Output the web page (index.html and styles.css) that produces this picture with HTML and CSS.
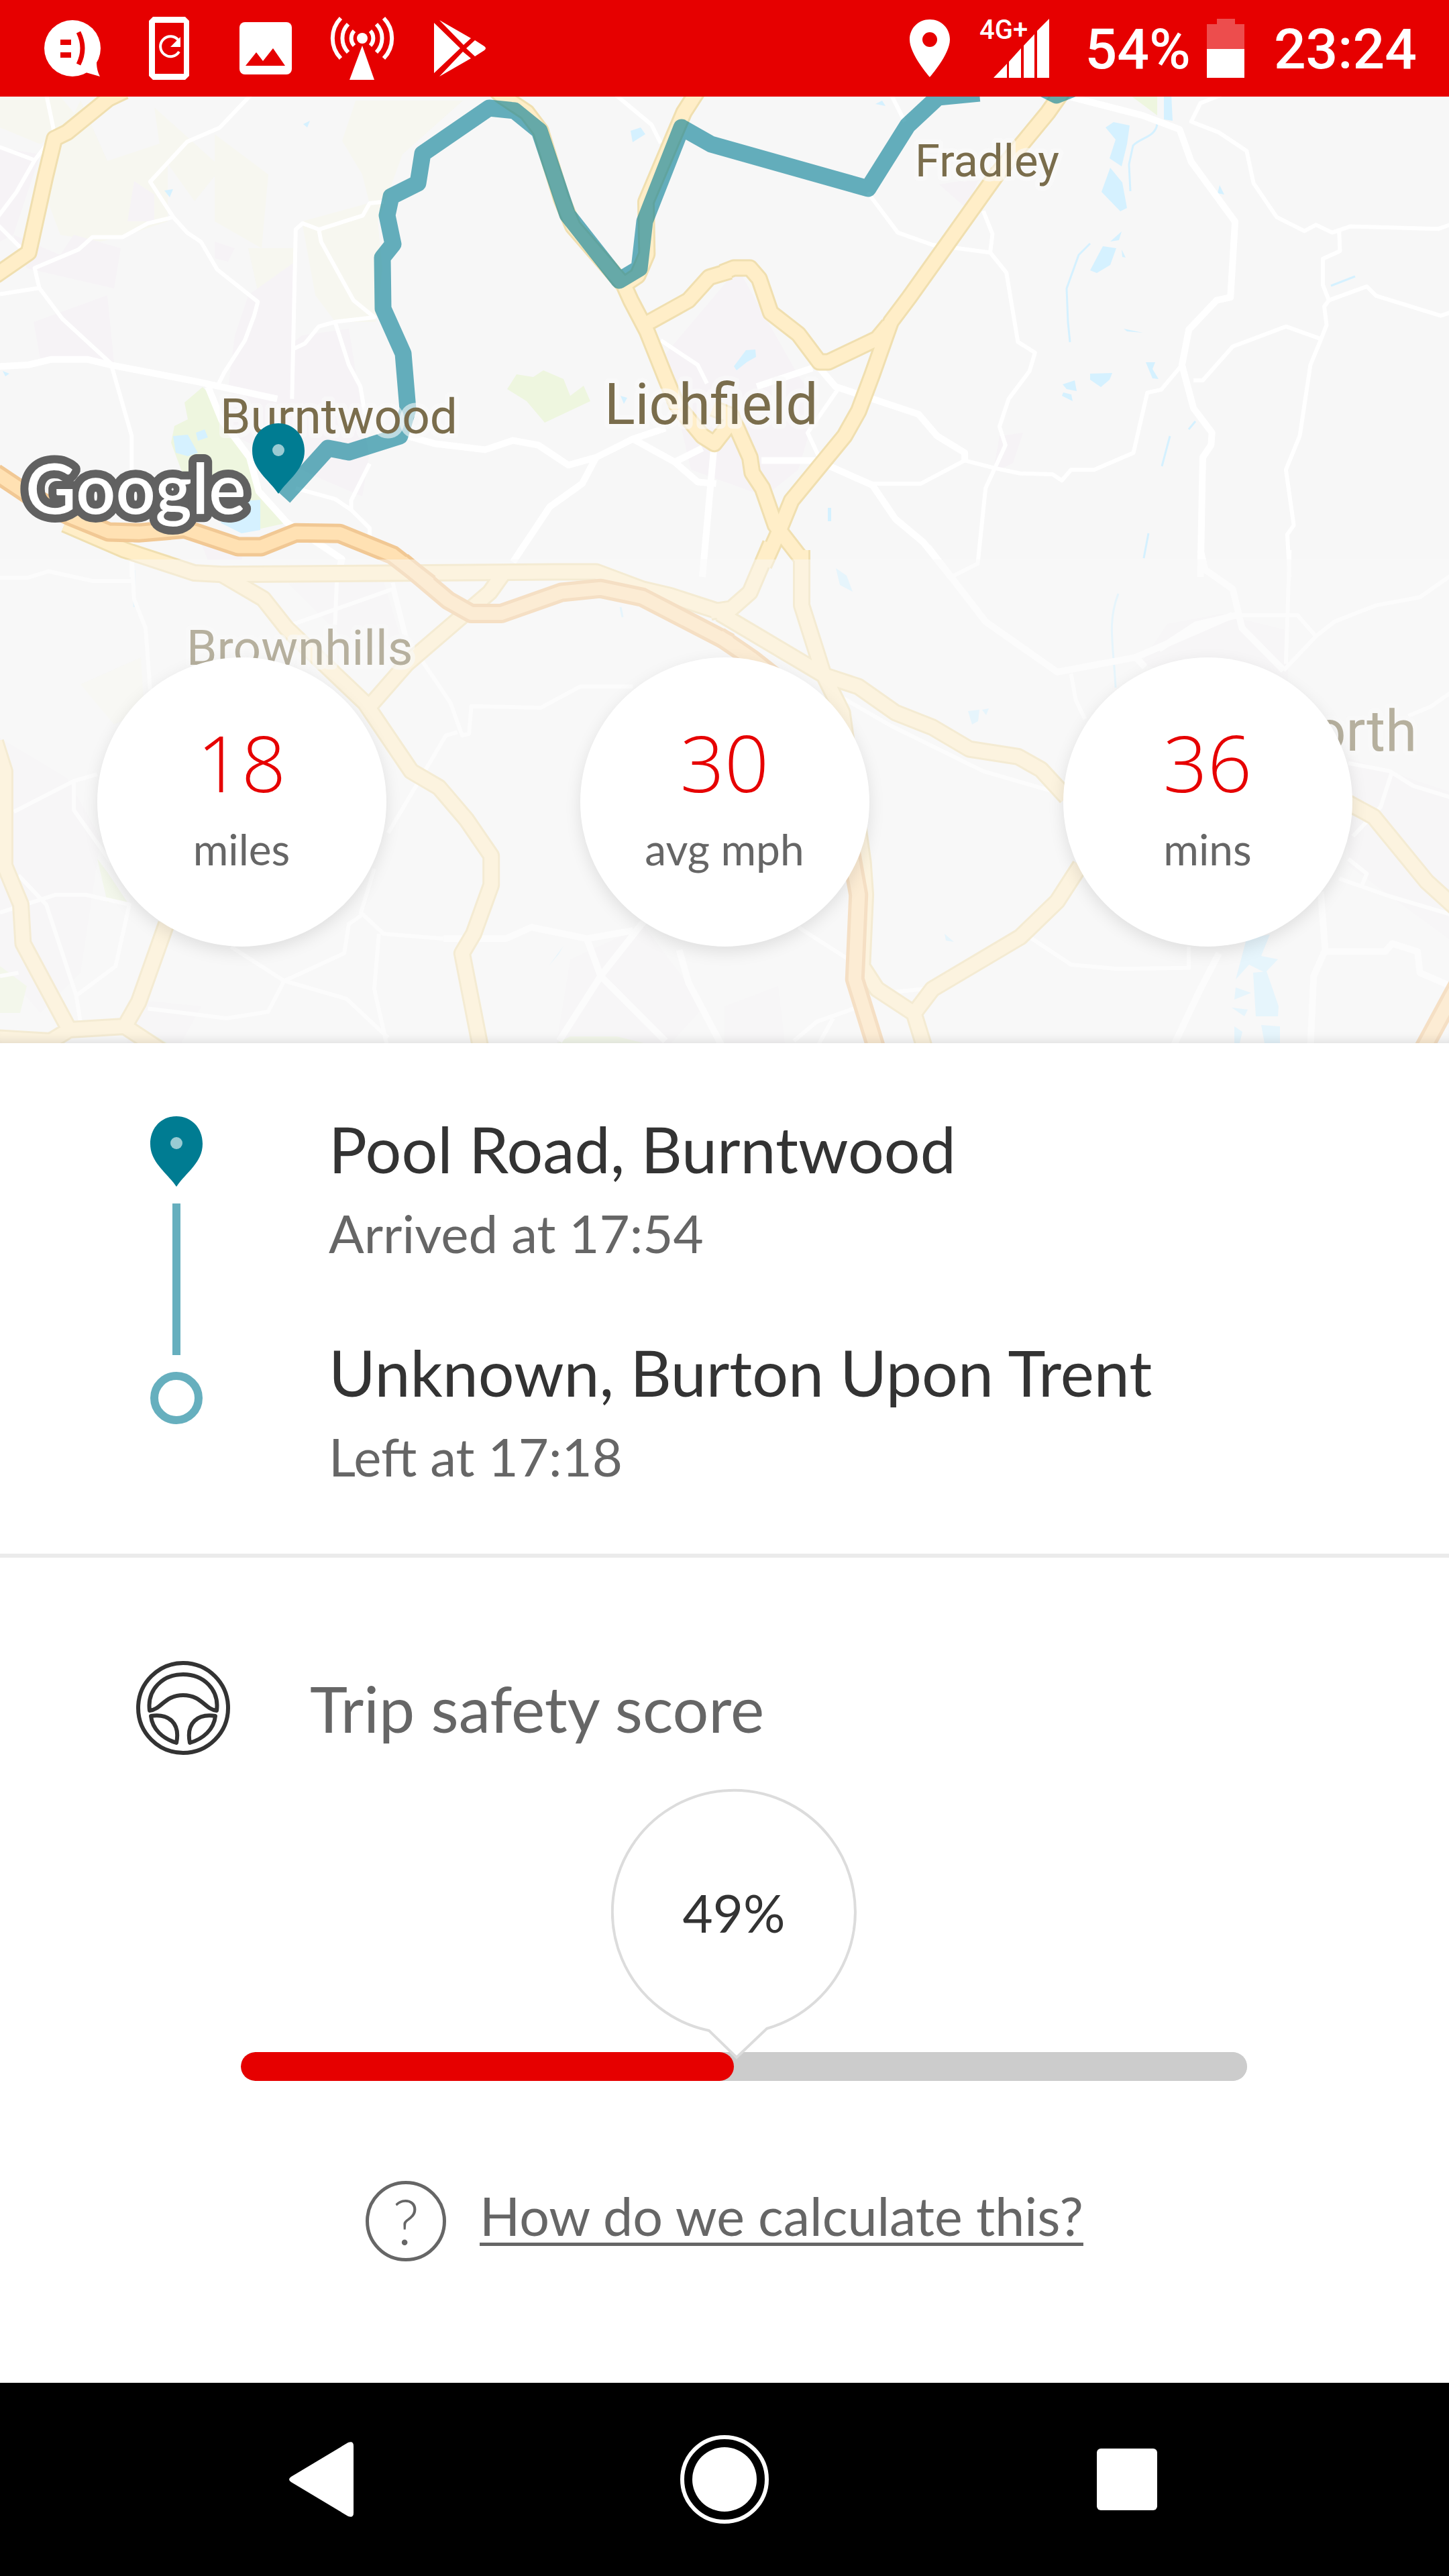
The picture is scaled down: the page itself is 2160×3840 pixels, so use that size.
FILE: index.html
```html
<!DOCTYPE html>
<html lang="en">
<head>
<meta charset="utf-8">
<meta name="viewport" content="width=device-width, initial-scale=1">
<title>Trip details</title>
<link rel="stylesheet" href="styles.css">
</head>
<body>
<header class="status">
  <div class="status-group status-apps">
    <svg class="status-icon" viewBox="0 0 96 96" aria-hidden="true"><circle cx="48" cy="48" r="42"/><path d="M84 68C84 78 86 84 89 90L68 84Z"/><path class="cut" d="M30 35h16v8H30zM30 54h16v8H30z"/><path class="cut-line" d="M57 24Q69 48 57 72" stroke-width="7"/></svg>
    <svg class="status-icon" viewBox="0 0 96 96" aria-hidden="true"><path fill-rule="evenodd" d="M24 1H72L78 7V89L72 95H24L18 89V7ZM27 10V86H70V10Z"/><path class="line" d="M62 36A15 15 0 1 0 63 53" stroke-width="4"/><path d="M65 31V46H50Z"/></svg>
    <svg class="status-icon" viewBox="0 0 96 96" aria-hidden="true"><rect x="9" y="9" width="78" height="78" rx="8"/><path class="cut" d="M18 74L34 54 44 67 59 48 77 74Z"/></svg>
    <svg class="status-icon" viewBox="0 0 96 96" aria-hidden="true"><circle cx="48" cy="33" r="8"/><path d="M48 44L66 95H29Z"/><path class="line" stroke-width="6" d="M16 3A43 43 0 0 0 16 63M27 12A30 30 0 0 0 27 54M36 22A16 16 0 0 0 36 44M80 3A43 43 0 0 1 80 63M69 12A30 30 0 0 1 69 54M60 22A16 16 0 0 1 60 44"/></svg>
    <svg class="status-icon" viewBox="0 0 96 96" aria-hidden="true"><path d="M11 10L50 48 11 85ZM19 6L66 33 55 43ZM19 90L54 53 66 63ZM72 36L86 45Q90 48 86 51L72 60 59 48Z"/></svg>
  </div>
  <div class="status-group status-system">
    <svg class="status-pin" viewBox="0 0 60 86" aria-hidden="true"><path fill-rule="evenodd" d="M30 0C13 0 0 13 0 30C0 52 30 86 30 86S60 52 60 30C60 13 47 0 30 0ZM30 19A11 11 0 1 1 30 41A11 11 0 1 1 30 19Z"/></svg>
    <svg class="status-signal" viewBox="0 0 106 114"><text x="0" y="43">4G+</text><path d="M21 101L41 80V101ZM44 77L62 57V101H44ZM66 53L82 36V101H66ZM86 31L104 13V101H86Z"/></svg>
    <span class="status-text">54%</span>
    <svg class="status-battery" viewBox="0 0 56 88" aria-hidden="true"><path opacity=".3" d="M15 0H42V8H56V45H0V8H15Z"/><path d="M0 45H56V88H0Z"/></svg>
    <time class="status-text">23:24</time>
  </div>
</header>

<main>
  <section class="map" aria-label="Trip route">
    <svg class="map-canvas" viewBox="0 144 2160 1411" aria-hidden="true">
      <defs>
        <g id="yellow-roads">
          <g transform="translate(0 140) scale(.6888 .4592)">
            <path d="M270-10L235 15 145 125 118 145 98 270 62 515-10 590"/>
            <path d="M1065-25L1085 5 1140 60 1170 120 1215 340 1240 430 1350 620 1365 670 1400 770 1440 920 1465 1010 1520 1110 1546 1135 1585 1060"/>
            <path d="M1510-10L1480 60 1398 350 1400 520 1380 590 1350 620M1400 745L1490 670 1535 595 1580 575"/>
          </g>
          <g transform="translate(1080 140) scale(.6888 .4592)">
            <path d="M-5 580L20 565H55L75 600 100 710 160 780 205 870H225L330 795 355 750"/>
            <path d="M735-15L700 60 590 260 400 660 360 740 320 910 290 1030 260 1110 145 1320 115 1430 85 1530"/>
            <path d="M-25 1020L15 1045 55 1180 60 1230 82 1280 110 1400 167 1510V1560"/>
          </g>
          <g transform="translate(0 820) scale(.6888 .4847)">
            <path d="M140-80L270 0 420 70 480 75 1200 67H1290L1390 120 1450 140 1580 200"/>
            <path d="M480 75L570 150 620 240 790 470 890 680 950 730 1010 830 1063 940V1030L1025 1180 1000 1240 1040 1530M800 480L880 350 1060 130 1090 70"/>
            <path d="M-10 590L10 680V970L45 1090 50 1210 150 1475 270 1465 300 1390 360 1150M-10 1500L110 1510 150 1475M270 1465L350 1540"/>
          </g>
          <g transform="translate(1080 820) scale(.6888 .4847)">
            <path d="M100-20L55 130 15 180-30 190M167 0V170L215 385M-10 195L215 385 290 420 370 500 450 545 530 612 635 635 685 675 740 760"/>
            <path d="M1340 770L1405 820 1520 1020 1590 1110M215 385L255 500 300 960 305 1060 298 1280 330 1350 410 1425 435 1540M410 1425L450 1350 640 1190 720 1080 770 970"/>
          </g>
        </g>
        <g id="orange-roads">
          <g transform="translate(0 140) scale(.6888 .4592)"><path d="M-10 1230L60 1300 150 1370 235 1422 300 1425 400 1412 515 1470H565L640 1425 735 1427 850 1497 930 1590"/></g>
          <g transform="translate(0 820) scale(.6888 .4847)"><path d="M870 35L970 155 1020 195H1085L1215 130 1300 118 1390 145 1580 285"/></g>
          <g transform="translate(1080 820) scale(.6888 .4847)"><path d="M-12 265L60 335 180 470 270 900 290 1060 282 1320 330 1540M1590 1330L1510 1540"/></g>
        </g>
      </defs>

      <rect class="land" y="144" width="2160" height="1411"/>
      <g class="heath">
        <path d="M0 144H90L120 180 60 215 0 190ZM120 150L160 240 250 210 250 330 190 350 150 360 90 350 60 270ZM230 160L330 250 290 300 240 230ZM320 200L400 260 390 370 320 330ZM530 150H690L600 230 560 340 540 260 510 210ZM450 330L560 300 570 400 560 480 500 480 470 440ZM370 370H440V450L390 460ZM120 1020L210 980 215 1060 170 1080Z"/>
      </g>
      <g class="urban">
        <path d="M0 220L60 230 20 350 0 360ZM200 270L230 290 230 330 190 330ZM50 480L160 440 170 540 60 535ZM370 440L440 390 440 560 340 580 350 500ZM320 360L350 370 340 390 320 385ZM20 350L90 380 110 350 180 370 170 430 40 400ZM450 500L520 490 550 680 540 740 470 710 330 640 330 600ZM990 530L1100 400 1190 560 1220 600 1190 700 1140 740 1030 700ZM1400 275L1460 265 1440 310ZM1490 650L1525 645 1510 690 1480 705ZM0 1100L100 1160 150 1250 120 1450 60 1510 0 1440ZM300 810L370 800 360 835 310 835ZM430 870L570 860 600 960 530 970ZM1740 930L1820 915 1920 940 1920 1050 1700 990ZM2010 1130L2160 1180V1400L2010 1290ZM200 1490L300 1500 270 1555H190ZM850 1430L960 1380 1050 1500 1000 1555H830ZM1080 1500L1160 1470 1170 1555H1080Z"/>
      </g>
      <g class="park">
        <path d="M302 577L315 590 330 630 375 690 395 740 425 780 380 790 330 770 290 740 270 700 255 660 260 635 280 625 275 600ZM756 580L770 558 795 562 810 552 840 565 850 590 870 575 880 598 812 630 785 598ZM1682 140H1725V172ZM145 1280L160 1300 190 1345H160ZM0 1440L40 1470 30 1510 0 1510ZM200 1525L250 1555H220ZM830 1555L850 1545 920 1545 960 1555Z"/>
      </g>
      <g class="water">
        <path d="M258 650L280 648 295 675 280 680 262 675ZM292 645L305 640 310 652 295 657ZM315 750L388 745V790L360 795 330 780ZM245 284L258 282 253 294ZM452 185L462 180 458 190ZM940 195L955 190 962 200 943 212ZM4 553L14 557 8 561ZM1305 155L1315 150 1320 158ZM1735 140H1746L1748 180 1735 178ZM1648 190L1660 182 1684 187 1680 215 1672 248 1654 236 1663 208ZM1655 250L1673 272 1680 310 1670 315 1642 286ZM1644 367L1664 370 1655 395 1635 407 1625 403ZM1655 360L1672 345 1668 358ZM1672 372L1678 384 1673 383ZM1112 522L1126 521 1127 532 1113 540 1098 552 1094 546ZM1625 557L1658 556 1654 566 1641 577 1625 566ZM1584 573L1602 567 1605 583 1590 580ZM1585 585L1597 588 1599 598 1583 590ZM1708 540H1722L1718 550 1727 565 1718 564ZM1675 490L1704 496 1680 494ZM1818 276L1825 290 1815 288ZM925 590L935 593 930 602ZM1234 757H1239V777H1234ZM1246 847L1262 858 1271 882 1252 872ZM1443 1060L1460 1058 1458 1075 1449 1080ZM1464 1058L1474 1056 1470 1066ZM1408 1392L1422 1404 1410 1402ZM818 1440L840 1410 833 1422ZM1858 1400L1893 1393 1880 1425 1905 1430 1886 1450 1862 1438 1842 1460ZM1842 1472L1865 1480 1840 1490ZM1868 1450L1888 1448 1906 1500 1905 1515H1872ZM1836 1502L1860 1505 1855 1515ZM1880 1528L1908 1530V1555H1885ZM1840 1530L1852 1538 1848 1555H1840Z"/>
        <path class="stream" d="M1725 185C1722 205 1700 205 1689 217L1683 245 1685 285M1625 363L1608 380 1590 430 1592 480 1595 510M1984 426L2020 412M1732 695L1744 650M1782 628L1772 640M1712 795L1705 832M1667 885C1650 930 1660 960 1663 1025M200 850V905M925 905L928 920"/>
      </g>
      <g class="white-roads">
        <g transform="translate(0 140) scale(.6888 .4592)">
          <path d="M100 0L118 130 75 215-5 170M75 215L35 320-5 400M-5 425L45 500M545 0L475 110 405 155 325 285 375 400 405 450 435 480 470 570 558 675 550 720 530 800 485 905 470 950M375 400L320 420 265 465H200L170 505 75 565 85 630 135 730 240 875 285 1110V1568M85 630L0 650M830 350L800 355 785 395 690 440 655 420 640 440 632 990M690 440L695 480 765 670 810 725 725 740 690 755 660 810 632 830M725 740L755 880 780 950 790 1040M640 1280L725 1315 760 1350 800 1410V1440M800 1200L760 1320V1350M1330 0L1410 100 1430 160M1430 800L1510 880 1530 940"/>
          <path class="wide" d="M-5 885L60 880 110 862H190L240 880 430 935 600 990M450 950L480 1060 540 1180 560 1290 620 1390 740 1510 730 1568M880 1110L940 1135 1050 1155 1110 1125 1165 1140 1230 1205 1290 1180 1370 1120 1440 1085M1370 1120L1460 1195 1520 1150M1460 1195L1510 1260 1550 1265M1545 1150L1520 1568M1290 1180L1260 1265 1190 1340 1110 1520"/>
        </g>
        <g transform="translate(1080 140) scale(.6888 .4592)">
          <path d="M360 0L390 90M310 320L375 450 450 490 575 515 580 455 560 380M575 515L610 580 635 805 672 840 660 900 615 990 595 1080 608 1140 585 1215 565 1280 548 1525 490 1568M245 960L180 1100 205 1180M310 1265H425L520 1190 585 1215 640 1232 710 1235 730 1255 750 1220 800 1220 885 1165 915 970 945 960 990 880M1080 0L1030 30 1010 90 1070 125 1130 185 1145 290 1195 400 1255 445 1280 425 1315 450 1355 430 1545 438 1570 425M1330 440L1332 510 1295 535V620L1308 670 1298 690 1303 750 1290 800 1268 880 1245 1110 1215 1220 1232 1400 1218 1430 1223 1568M1308 670L1390 625 1410 655 1550 720 1570 710M1290 795L1215 755 1100 820 1035 930H1015"/>
          <path class="wide" d="M750 10L905 70 985 115 1010 220 1105 415 1095 660 1065 670 1005 765 990 880 1015 1020 1055 1100 1053 1140 1035 1180 1030 1568M70 950L190 890M200 880L240 950 320 990 420 1040 460 1110 520 1165V1190M80 1190L200 1190 320 1270 370 1380 430 1455 490 1568"/>
        </g>
        <g transform="translate(0 820) scale(.6888 .4847)">
          <path d="M-5 85H60L105 65 200 95H285M285 0L290 150 315 240 325 430M730 60L725 230M620 235L850 120 875 260M850 100L880 270 975 470 1000 570 1015 565 1020 480 1170 485 1255 420H1370M990 560L965 570 840 870M30 805L160 710 210 690M160 710V800L240 960M40 1000L100 1090 165 1370 175 1460M0 1115L120 1060H185L280 1090 250 1280 165 1370M500 1220L615 1325 745 1240 755 1150 785 1120 830 1180 960 1195M780 1120L810 980M820 1180L810 1350 840 1540M615 1325L750 1380 840 1500M615 1325L580 1420 490 1440 320 1410M0 1310L40 1300"/>
          <path class="wide" d="M960 1195H1095L1150 1160 1270 1195 1370 1170M1270 1195L1300 1310 1440 1510M1400 1130L1300 1310 1210 1510M1470 1230L1490 1330 1568 1540"/>
        </g>
        <g transform="translate(1080 820) scale(.6888 .4847)">
          <path d="M1223 0L1215 350M1110 200H1240L1280 265 1210 370M1280 265L1320 220 1410 170 1505 145 1570 80M1480 510L1530 480 1570 440M750 380L760 460 780 520M250 450L360 540 560 680 730 750M1350 655L1440 680 1490 725 1570 760M1445 680L1420 790 1360 880M1350 950L1390 995 1380 1030M1330 1010L1440 1065 1570 1120M160 1160L270 1260M660 1190L750 1275 850 1288 1005 1285V1220M360 1360L430 1350M150 1510L200 1450 280 1410M235 1440L200 1530"/>
          <path class="wide" d="M440-10L565 220 720 375 890 330 1100 200M1030 0L1040 60 1100 120 1120 240 1210 370M890 330L910 360M940 305L1020 230 1110 200M1290 1050L1300 1230 1275 1310 1268 1530M1300 1235H1430L1445 1210 1500 1235 1505 1300 1570 1340M1070 1240L1030 1350 970 1530"/>
        </g>
      </g>
      <use class="yellow-edge" href="#yellow-roads"/>
      <use class="yellow-fill" href="#yellow-roads"/>
      <use class="orange-edge" href="#orange-roads"/>
      <use class="orange-fill" href="#orange-roads"/>
      <path class="route" d="M423 741L489 668 520 674 596 650 608 610 601 527 571 460 570 384 586 364 577 321 583 293 623 273 630 229 729 161 767 165 804 195 846 320 923 418 953 400 961 330 1016 190 1060 215 1294 281 1353 187 1398 145 1460 139"/>
      <path class="route" d="M1555 132L1575 142 1600 132"/>

      <g class="place">
        <text x="1364" y="263" font-size="67">Fradley</text>
        <text x="328" y="646" font-size="73">Burntwood</text>
        <text x="901" y="632" font-size="85">Lichfield</text>
        <text x="278" y="991" font-size="73">Brownhills</text>
        <text x="2112" y="1119" font-size="85" text-anchor="end">orth</text>
      </g>
      <text class="map-brand" x="38" y="766">Google</text>
      <path class="pin-body" d="M415 631C393 631 376 648 376 672C376 700 400 714 415 736C430 714 454 700 454 672C454 648 437 631 415 631Z"/>
      <circle class="pin-dot" cx="415" cy="671" r="9"/>
    </svg>

    <ul class="stats">
      <li class="stat"><strong>18</strong><span>miles</span></li>
      <li class="stat"><strong>30</strong><span>avg mph</span></li>
      <li class="stat"><strong>36</strong><span>mins</span></li>
    </ul>
  </section>

  <section class="journey" aria-label="Journey">
    <div class="track" aria-hidden="true">
      <svg class="track-pin" viewBox="0 0 78 105"><path class="pin-body" d="M39 0C17 0 0 17 0 41C0 69 24 83 39 105C54 83 78 69 78 41C78 17 61 0 39 0Z"/><circle class="pin-dot" cx="39" cy="40" r="9"/></svg>
      <span class="track-line"></span>
      <span class="track-ring"></span>
    </div>
    <div class="stops">
      <div class="stop"><h2>Pool Road, Burntwood</h2><p>Arrived at 17:54</p></div>
      <div class="stop"><h2>Unknown, Burton Upon Trent</h2><p>Left at 17:18</p></div>
    </div>
  </section>

  <section class="score">
    <header class="score-head">
      <svg class="wheel" viewBox="0 0 140 140" aria-hidden="true"><circle cx="70" cy="70" r="67"/><path d="M20 74C16 42 40 20 70 20S124 42 120 74C102 72 98 51 70 51S38 72 20 74Z"/><path d="M22 82C48 78 66 92 60 122C40 116 24 102 22 82ZM118 82C92 78 74 92 80 122C100 116 116 102 118 82Z"/></svg>
      <h2 id="score-title">Trip safety score</h2>
    </header>
    <div class="meter">
      <div class="bubble" style="margin-left: calc(49% - 183px)">
        <svg viewBox="0 0 366 404" aria-hidden="true"><path d="M146 361A181 181 0 1 1 232 358L187 401Z"/></svg>
        <span>49%</span>
      </div>
      <progress value="49" max="100" aria-labelledby="score-title"></progress>
    </div>
    <div class="help">
      <span class="help-icon" aria-hidden="true">?</span>
      <a href="#score-title">How do we calculate this?</a>
    </div>
  </section>
</main>

<nav class="system-nav" aria-label="System">
  <button type="button" aria-label="Back"><svg viewBox="0 0 132 132"><path d="M20 62Q14 66 20 70L105 121Q113 124 113 116V16Q113 8 105 11Z"/></svg></button>
  <button type="button" aria-label="Home"><svg viewBox="0 0 132 132"><circle cx="66" cy="66" r="48"/><circle class="home-ring" cx="66" cy="66" r="63"/></svg></button>
  <button type="button" aria-label="Recent apps"><svg viewBox="0 0 132 132"><rect x="21" y="20" width="90" height="92" rx="6"/></svg></button>
</nav>
</body>
</html>
```
FILE: styles.css
```css
* { box-sizing: border-box; }

body {
  margin: 0;
  min-height: 100vh;
  display: flex;
  flex-direction: column;
  background: #fff;
  color: #333;
  font-family: Lato, "Open Sans", sans-serif;
}

h2, p, ul { margin: 0; font-weight: 400; }
svg { display: block; }

/* Status bar */
.status {
  display: flex;
  justify-content: space-between;
  align-items: center;
  height: 144px;
  padding: 0 48px 0 60px;
  background: #e60000;
  color: #fff;
  font: 500 84px/100px Roboto, sans-serif;
}
.status-group { display: flex; align-items: center; }
.status-apps { gap: 48px; }
.status svg { fill: #fff; }
.status-icon { width: 96px; height: 96px; }
.status-icon .cut { fill: #e60000; }
.status-icon .cut-line { fill: none; stroke: #e60000; }
.status-icon .line { fill: none; stroke: #fff; }
.status-pin { width: 60px; height: 86px; margin-right: 44px; }
.status-signal { width: 106px; height: 114px; margin-right: 52px; }
.status-signal text { font-size: 40px; font-weight: 500; }
.status-text { padding-top: 4px; }
.status-battery { width: 56px; height: 88px; margin: 0 44px 0 24px; }

/* Map */
.map { display: grid; }
.map-canvas, .stats { grid-area: 1 / 1; }
.map-canvas { width: 100%; height: auto; }
.map-canvas path { vector-effect: non-scaling-stroke; stroke-linejoin: round; }
.land { fill: #f7f7f7; }
.heath { fill: #f7f7f0; }
.urban { fill: #f6f3f6; }
.park { fill: #eef6df; }
.water { fill: #d5f1ff; }
.stream { fill: none; stroke: #d5f1ff; stroke-width: 3; }
.white-roads { fill: none; stroke: #fff; stroke-width: 6; }
.white-roads .wide { stroke-width: 10; }
.yellow-edge { fill: none; stroke: #f0dfb0; stroke-width: 26; }
.yellow-fill { fill: none; stroke: #ffeec8; stroke-width: 20; }
.orange-edge { fill: none; stroke: #f1c894; stroke-width: 29; }
.orange-fill { fill: none; stroke: #ffe1b3; stroke-width: 19; }
.route { fill: none; stroke: #007c92; stroke-opacity: .6; stroke-width: 25; }
.place {
  fill: #7a6d4c;
  stroke: rgba(250, 250, 250, .6);
  stroke-width: 14;
  stroke-linejoin: round;
  paint-order: stroke;
  font-family: Roboto, sans-serif;
}
.map-brand {
  fill: #fff;
  stroke: #616161;
  stroke-width: 24;
  stroke-linejoin: round;
  paint-order: stroke;
  font: 600 104px Lato, sans-serif;
}
.pin-body { fill: #007c92; }
.pin-dot { fill: #99cbd3; }

.stats {
  align-self: end;
  display: grid;
  grid-template-columns: repeat(3, 1fr);
  justify-items: center;
  padding: 146px 0 144px;
  background: rgba(249, 249, 249, .48);
  box-shadow: inset 0 -16px 16px -14px rgba(0, 0, 0, .12);
  list-style: none;
}
.stat {
  display: flex;
  flex-direction: column;
  align-items: center;
  width: 431px;
  height: 431px;
  padding-top: 86px;
  border-radius: 50%;
  background: #fff;
  box-shadow: 0 8px 24px rgba(0, 0, 0, .1);
}
.stat strong { color: #e60000; font: 300 116px/140px "Open Sans", sans-serif; }
.stat span { color: #666; font-size: 64px; line-height: 120px; }

/* Start and end of the trip */
.journey {
  display: flex;
  gap: 188px;
  padding: 99px 96px 97px 224px;
  border-bottom: 6px solid #ebebeb;
}
.track {
  display: flex;
  flex-direction: column;
  align-items: center;
  gap: 25px;
  width: 78px;
  padding: 10px 0 96px;
}
.track-pin { width: 78px; height: 105px; }
.track-line { flex: 1; width: 12px; background: #66afbe; }
.track-ring { width: 78px; height: 78px; border: 12px solid #66afbe; border-radius: 50%; }
.stops { display: flex; flex-direction: column; gap: 101px; }
.stop h2 { margin-bottom: 20px; font-size: 95px; line-height: 116px; }
.stop p { color: #666; font-size: 78px; line-height: 96px; }

/* Safety score */
.score { padding: 154px 0 180px; }
.score-head { display: flex; align-items: center; gap: 119px; padding-left: 203px; }
.score-head h2 { color: #666; font-size: 95px; line-height: 116px; }
.wheel { width: 140px; height: 140px; fill: none; stroke: #333; stroke-width: 6; stroke-linejoin: round; }
.meter { margin: 50px 301px 149px 359px; }
.bubble {
  position: relative;
  display: grid;
  justify-items: center;
  width: 366px;
  margin-bottom: -11px;
}
.bubble svg, .bubble span { grid-area: 1 / 1; }
.bubble svg { width: 366px; height: 404px; fill: #fff; stroke: #dcdcdc; stroke-width: 4; }
.bubble span { font-size: 78px; line-height: 370px; }
progress {
  display: block;
  width: 100%;
  height: 43px;
  border: 0;
  border-radius: 22px;
  appearance: none;
  background: #ccc;
  overflow: hidden;
}
progress::-webkit-progress-bar { background: #ccc; border-radius: 22px; }
progress::-webkit-progress-value { background: #e60000; border-radius: 22px; }
.help { display: flex; justify-content: center; gap: 50px; color: #666; }
.help-icon {
  width: 120px;
  height: 120px;
  border: 5px solid #666;
  border-radius: 50%;
  font-size: 92px;
  font-weight: 300;
  line-height: 110px;
  text-align: center;
}
.help a {
  color: inherit;
  font-size: 79px;
  line-height: 104px;
  text-decoration: underline 5px;
  text-underline-offset: 10px;
  text-decoration-skip-ink: none;
}

/* Navigation bar */
.system-nav {
  display: flex;
  justify-content: center;
  align-items: center;
  gap: 468px;
  height: 288px;
  margin-top: auto;
  background: #000;
}
.system-nav button { padding: 0; border: 0; background: none; }
.system-nav svg { width: 132px; height: 132px; fill: #fff; }
.system-nav .home-ring { fill: none; stroke: #fff; stroke-width: 6; }
```
